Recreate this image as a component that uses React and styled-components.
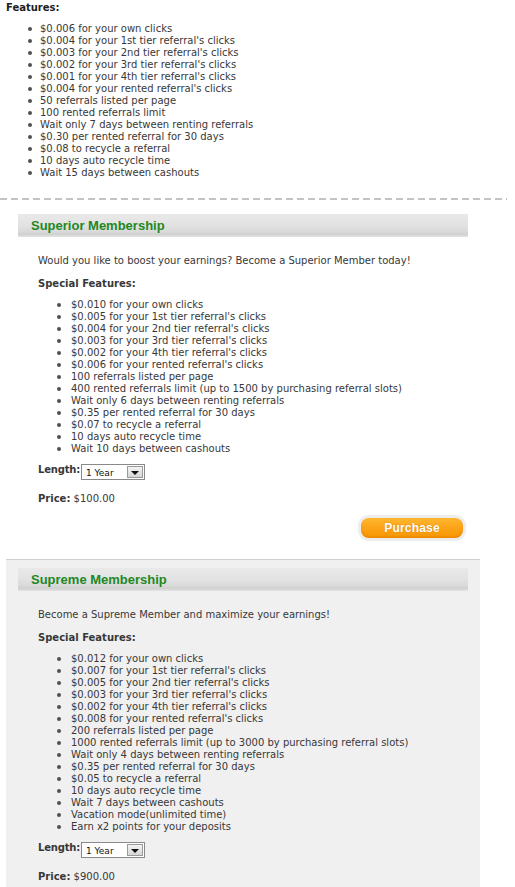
import React from 'react';
import styled, { createGlobalStyle } from 'styled-components';

const GlobalStyle = createGlobalStyle`
  * { box-sizing: border-box; }
  html, body { margin: 0; padding: 0; background: #ffffff; }
  body {
    font-family: "DejaVu Sans", Verdana, sans-serif;
    font-size: 10px;
    line-height: 12px;
    color: #383838;
  }
`;

const Page = styled.div`
  width: 515px;
  display: flex;
  flex-direction: column;
`;

const TopBlock = styled.div`
  margin-left: 6px;
  padding-top: 2px;
`;

const Heading = styled.div`
  font-weight: bold;
  color: ${p => p.$dark ? '#1e1e1e' : '#383838'};
  margin-top: ${p => p.$mt || 0}px;
  line-height: 12px;
`;

const List = styled.ul`
  list-style: none;
  margin: ${p => p.$mt || 0}px 0 0 0;
  padding: 0 0 0 ${p => p.$indent}px;
`;

const Item = styled.li`
  display: flex;
  align-items: center;
  height: 12px;
  white-space: nowrap;
  &::before {
    content: '';
    flex: none;
    width: 4px;
    height: 4px;
    border-radius: 50%;
    background: #505050;
    margin-right: ${p => p.$gap}px;
  }
`;

const Divider = styled.div`
  width: 507px;
  height: 2px;
  margin-top: 19px;
  background: repeating-linear-gradient(to right, #c4c4c4 0 7px, transparent 7px 11px);
`;

const Section = styled.section`
  margin-left: 6px;
  width: 474px;
  padding-top: ${p => p.$shaded ? 8 : 14}px;
  padding-bottom: ${p => p.$shaded ? 40 : 21}px;
  background: ${p => p.$shaded ? '#f0f0f0' : '#ffffff'};
  border-top: ${p => p.$shaded ? '1px solid #cfcfcf' : 'none'};
`;

const SectionBar = styled.div`
  margin: 0 12px;
  height: 23px;
  padding-left: 13px;
  display: flex;
  align-items: center;
  background: linear-gradient(to bottom, #e9e9e9 0%, #e2e2e2 50%, #d9d9d9 78%, #d0d0d0 88%, #e4e4e4 100%);
`;

const SectionTitle = styled.h2`
  margin: 0;
  font-family: "Liberation Sans", Arial, sans-serif;
  font-size: 13px;
  font-weight: bold;
  color: #22881f;
  line-height: 15px;
`;

const SectionBody = styled.div`
  padding-left: 32px;
  display: flex;
  flex-direction: column;
`;

const Intro = styled.p`
  margin: 18px 0 0 0;
  line-height: 12px;
`;

const LengthRow = styled.div`
  margin-top: 9px;
  display: flex;
  align-items: flex-start;
  gap: 1px;
`;

const Label = styled.span`
  font-weight: bold;
  line-height: 12px;
  letter-spacing: -0.2px;
`;

const SelectBox = styled.div`
  width: 64px;
  height: 16px;
  border: 1px solid #8a8a8a;
  background: #ffffff;
  display: flex;
  align-items: center;
  justify-content: space-between;
  padding: 0 1px 0 4px;
  font-size: 9px;
  color: #111;
  line-height: 10px;
`;

const SelectText = styled.span`
  padding-top: 2px;
`;

const SelectArrow = styled.span`
  width: 16px;
  height: 12px;
  border: 1px solid #9a9a9a;
  background: linear-gradient(to bottom, #f4f4f4, #d6d6d6);
  display: flex;
  align-items: center;
  justify-content: center;
  &::after {
    content: '';
    width: 0;
    height: 0;
    margin-top: 2px;
    border-left: 4px solid transparent;
    border-right: 4px solid transparent;
    border-top: 4px solid #111;
  }
`;

const Price = styled.div`
  margin-top: 13px;
  line-height: 12px;
`;

const Bold = styled.b`
  font-weight: bold;
`;

const ButtonRow = styled.div`
  margin-top: 13px;
  padding-right: 17px;
  display: flex;
  justify-content: flex-end;
`;

const PurchaseButton = styled.button`
  width: 102px;
  height: 20px;
  padding: 0;
  border: none;
  border-radius: 8px;
  background: linear-gradient(to bottom, #ffb730 0%, #fca51a 45%, #f79500 100%);
  box-shadow: 0 0 0 3px #ededed, inset 0 -1px 2px rgba(220, 110, 0, 0.5);
  color: #ffffff;
  font-family: "Liberation Sans", Arial, sans-serif;
  font-size: 12px;
  font-weight: bold;
  letter-spacing: 0.2px;
  text-shadow: 0 0 1px rgba(170, 90, 0, 0.6);
  cursor: pointer;
`;

const freeFeatures = [
  "$0.006 for your own clicks",
  "$0.004 for your 1st tier referral's clicks",
  "$0.003 for your 2nd tier referral's clicks",
  "$0.002 for your 3rd tier referral's clicks",
  "$0.001 for your 4th tier referral's clicks",
  "$0.004 for your rented referral's clicks",
  "50 referrals listed per page",
  "100 rented referrals limit",
  "Wait only 7 days between renting referrals",
  "$0.30 per rented referral for 30 days",
  "$0.08 to recycle a referral",
  "10 days auto recycle time",
  "Wait 15 days between cashouts",
];

const memberships = [
  {
    title: 'Superior Membership',
    intro: 'Would you like to boost your earnings? Become a Superior Member today!',
    price: '$100.00',
    shaded: false,
    button: true,
    features: [
      "$0.010 for your own clicks",
      "$0.005 for your 1st tier referral's clicks",
      "$0.004 for your 2nd tier referral's clicks",
      "$0.003 for your 3rd tier referral's clicks",
      "$0.002 for your 4th tier referral's clicks",
      "$0.006 for your rented referral's clicks",
      "100 referrals listed per page",
      "400 rented referrals limit (up to 1500 by purchasing referral slots)",
      "Wait only 6 days between renting referrals",
      "$0.35 per rented referral for 30 days",
      "$0.07 to recycle a referral",
      "10 days auto recycle time",
      "Wait 10 days between cashouts",
    ],
  },
  {
    title: 'Supreme Membership',
    intro: 'Become a Supreme Member and maximize your earnings!',
    price: '$900.00',
    shaded: true,
    button: false,
    features: [
      "$0.012 for your own clicks",
      "$0.007 for your 1st tier referral's clicks",
      "$0.005 for your 2nd tier referral's clicks",
      "$0.003 for your 3rd tier referral's clicks",
      "$0.002 for your 4th tier referral's clicks",
      "$0.008 for your rented referral's clicks",
      "200 referrals listed per page",
      "1000 rented referrals limit (up to 3000 by purchasing referral slots)",
      "Wait only 4 days between renting referrals",
      "$0.35 per rented referral for 30 days",
      "$0.05 to recycle a referral",
      "10 days auto recycle time",
      "Wait 7 days between cashouts",
      "Vacation mode(unlimited time)",
      "Earn x2 points for your deposits",
    ],
  },
];

function Membership({ m }) {
  return (
    <Section $shaded={m.shaded}>
      <SectionBar>
        <SectionTitle>{m.title}</SectionTitle>
      </SectionBar>
      <SectionBody>
        <Intro>{m.intro}</Intro>
        <Heading $mt={11}>Special Features:</Heading>
        <List $mt={9} $indent={19}>
          {m.features.map(f => (
            <Item key={f} $gap={10}>{f}</Item>
          ))}
        </List>
        <LengthRow>
          <Label>Length:</Label>
          <SelectBox>
            <SelectText>1 Year</SelectText>
            <SelectArrow />
          </SelectBox>
        </LengthRow>
        <Price><Bold>Price:</Bold> {m.price}</Price>
      </SectionBody>
      {m.button && (
        <ButtonRow>
          <PurchaseButton type="button">Purchase</PurchaseButton>
        </ButtonRow>
      )}
    </Section>
  );
}

export default function App() {
  return (
    <>
      <GlobalStyle />
      <Page>
        <TopBlock>
          <Heading $dark>Features:</Heading>
          <List $mt={9} $indent={22}>
            {freeFeatures.map(f => (
              <Item key={f} $gap={8}>{f}</Item>
            ))}
          </List>
        </TopBlock>
        <Divider />
        {memberships.map(m => (
          <Membership key={m.title} m={m} />
        ))}
      </Page>
    </>
  );
}
